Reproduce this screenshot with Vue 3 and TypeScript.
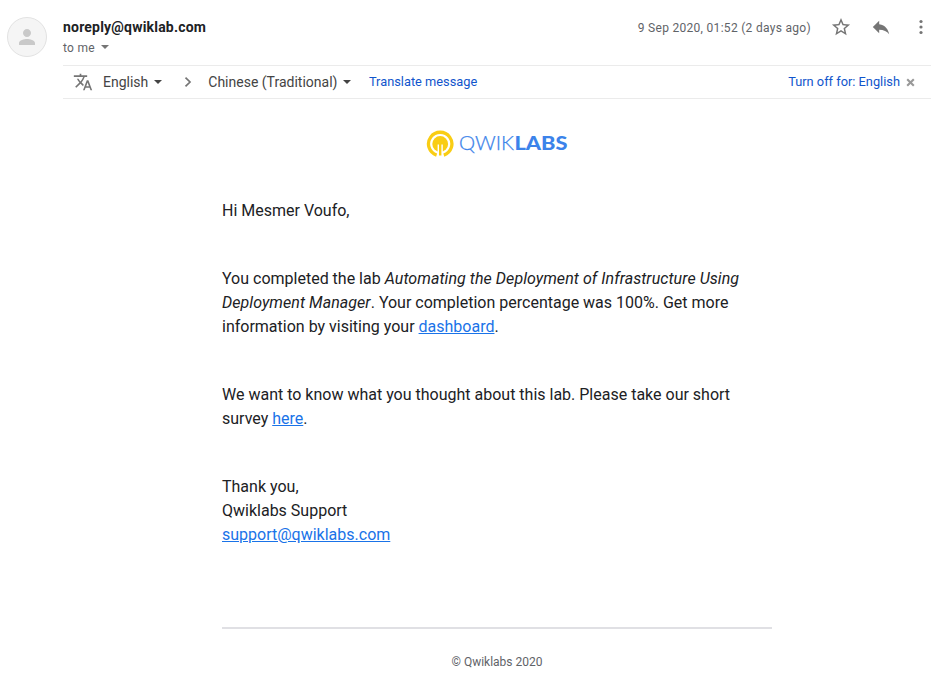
<script setup lang="ts">
const sender: string = 'noreply@qwiklab.com'
const sentAt: string = '9 Sep 2020, 01:52 (2 days ago)'
</script>

<template>
  <main class="mail">
    <header class="head">
      <div class="avatar">
        <svg width="24" height="24" viewBox="0 0 24 24"><path fill="#c9c9c9" d="M12 12c2.200 0 4-1.800 4-4s-1.800-4-4-4-4 1.800-4 4 1.800 4 4 4zm0 2c-2.700 0-8 1.300-8 4v2h16v-2c0-2.700-5.300-4-8-4z" /></svg>
      </div>
      <div class="who">
        <div class="sender">{{ sender }}</div>
        <div class="to"><span>to me</span><i class="caret grey"></i></div>
      </div>
      <span class="date">{{ sentAt }}</span>
      <div class="actions">
        <svg width="20" height="20" viewBox="1 1 22 22"><path fill="#757575" d="M22 9.240l-7.190-.62L12 2 9.190 8.630 2 9.240l5.460 4.730L5.820 21 12 17.270 18.180 21l-1.630-7.030L22 9.240zM12 15.400l-3.760 2.270 1-4.280-3.320-2.880 4.380-.38L12 6.100l1.710 4.040 4.380.38-3.320 2.880 1 4.280L12 15.400z" /></svg>
        <svg width="20" height="20" viewBox="1 1 22 22"><path fill="#757575" d="M10 9V5l-7 7 7 7v-4.100c5 0 8.500 1.600 11 5.100-1-5-4-10-11-11z" /></svg>
        <svg width="20" height="20" viewBox="0 0 20 20"><g fill="#757575"><circle cx="10" cy="4.500" r="1.600" /><circle cx="10" cy="10" r="1.600" /><circle cx="10" cy="15.500" r="1.600" /></g></svg>
      </div>
    </header>

    <section class="translate">
      <svg class="glyph" width="20" height="20" viewBox="0 0 24 24"><path fill="#757575" d="M12.870 15.070l-2.540-2.510.03-.03c1.740-1.940 2.980-4.170 3.710-6.530H17V4h-7V2H8v2H1v1.990h11.170C11.500 7.920 10.440 9.750 9 11.350 8.070 10.320 7.300 9.190 6.690 8h-2c.73 1.630 1.730 3.170 2.980 4.560l-5.090 5.020L4 19l5-5 3.110 3.110.76-2.040zM18.500 10h-2L12 22h2l1.120-3h4.750L21 22h2l-4.500-12zm-2.620 7l1.620-4.330L19.120 17h-3.240z" /></svg>
      <span class="lang from">English</span><i class="caret"></i>
      <svg class="chevron" width="8" height="12" viewBox="0 0 8 12"><path d="M1.500 1.600L6 6l-4.500 4.400" fill="none" stroke="#757575" stroke-width="1.700" /></svg>
      <span class="lang target">Chinese (Traditional)</span><i class="caret"></i>
      <a class="action">Translate message</a>
      <a class="off">Turn off for: English</a>
      <svg class="close" width="9" height="9" viewBox="0 0 9 9"><path d="M1.200 1.200l6.600 6.600M7.800 1.200L1.200 7.800" stroke="#999" stroke-width="2.100" /></svg>
    </section>

    <article class="letter">
      <svg class="logo" width="142" height="30" viewBox="0 0 142 30">
        <path d="M10.600 26.100A11.700 11.700 0 1 1 17.800 26.100" fill="none" stroke="#f9cd14" stroke-width="3.300" />
        <circle cx="14.200" cy="15" r="7.900" fill="#f9cd14" />
        <path d="M11.600 15.500h5.200v9h-5.200z" fill="#fff" />
        <path d="M13 14.500h2.400v12h-2.400z" fill="#f9cd14" />
        <text class="thin" x="33" y="20.800" textLength="55" lengthAdjust="spacingAndGlyphs">QWIK</text>
        <text class="thick" x="88.500" y="20.800" textLength="53" lengthAdjust="spacingAndGlyphs">LABS</text>
      </svg>
      <p>Hi Mesmer Voufo,</p>
      <p>You completed the lab <em>Automating the Deployment of Infrastructure Using Deployment Manager</em>. Your completion percentage was 100%. Get more information by visiting your <a>dashboard</a>.</p>
      <p>We want to know what you thought about this lab. Please take our short survey <a>here</a>.</p>
      <p>Thank you,<br>Qwiklabs Support<br><a>support@qwiklabs.com</a></p>
      <footer>© Qwiklabs 2020</footer>
    </article>
  </main>
</template>

<style>
body { background: #fff; }
</style>

<style scoped>
.mail {
  box-sizing: border-box;
  width: 938px;
  height: 690px;
  padding: 17px 7px 0;
  overflow: hidden;
  font-family: Roboto, sans-serif;
  color: #202124;
}
svg { display: block; flex: none; }
.head { display: flex; align-items: flex-start; height: 48px; }
.avatar {
  box-sizing: border-box;
  display: flex;
  align-items: center;
  justify-content: center;
  width: 40px;
  height: 40px;
  margin-right: 16px;
  border: 1px solid #e2e2e2;
  border-radius: 50%;
  background: #f5f5f5;
}
.who { flex: 1; }
.sender { font-size: 14px; font-weight: 700; line-height: 20px; letter-spacing: .2px; }
.to {
  display: flex;
  align-items: center;
  gap: 6px;
  padding-top: 1px;
  font-size: 12px;
  line-height: 20px;
  letter-spacing: .3px;
  color: #5f6368;
}
.to .caret { margin-top: -2px; }
.caret {
  border: 4px solid transparent;
  border-top-color: #444;
  border-bottom: 0;
}
.caret.grey { border-top-color: #757575; }
.date {
  margin-right: 20px;
  font-size: 12px;
  line-height: 22px;
  letter-spacing: .3px;
  color: #5f6368;
}
.actions { display: flex; gap: 20px; }
.translate {
  box-sizing: border-box;
  display: flex;
  align-items: center;
  height: 34px;
  margin-left: 56px;
  padding-left: 10px;
  border-top: 1px solid #ebebeb;
  border-bottom: 1px solid #ebebeb;
  font-size: 12.800px;
}
.lang { margin-right: 6px; font-size: 14px; color: #444; }
.from { margin-left: 10px; }
.chevron { margin: 0 16px 0 22px; }
.action, .off { padding-bottom: 2px; color: #15c; }
.action { margin-left: 17.500px; }
.off { margin-left: auto; }
.close { margin: 1px 16px 0 6px; }
.letter {
  width: 550px;
  margin: 30px 0 0 215px;
  font-size: 16px;
  line-height: 24px;
}
.logo { margin: 0 auto 40px 204px; }
.thin, .thick { font-family: Lato, sans-serif; font-size: 19px; fill: #3c83ea; }
.thin { font-weight: 300; stroke: #3c83ea; stroke-width: .25px; }
.thick { font-weight: 900; }
p { margin: 0 0 44px; }
p a { color: #1a73e8; text-decoration: underline; }
em { letter-spacing: .06px; }
footer {
  margin-top: 80px;
  padding-top: 21px;
  border-top: 2px solid #e0e0e4;
  font-size: 12px;
  text-align: center;
  color: #5f6368;
}
</style>
